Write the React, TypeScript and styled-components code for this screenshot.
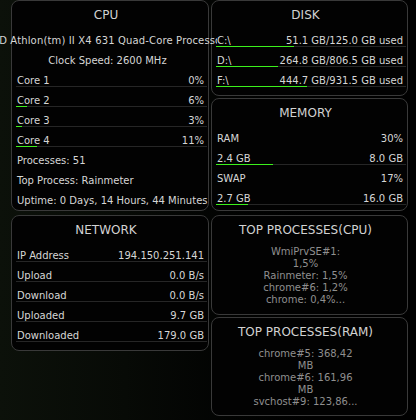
import React from "react";
import styled, { createGlobalStyle } from "styled-components";

const GlobalStyle = createGlobalStyle`
  html, body {
    margin: 0;
    padding: 0;
    height: 100%;
  }
  html {
    background: linear-gradient(90deg, #0c110a 0%, #070a06 30%, #020302 55%, #000 75%);
  }
  body {
    font-family: "DejaVu Sans", "Liberation Sans", sans-serif;
    color: #d6d6d6;
    font-size: 10px;
    overflow: hidden;
  }
`;

const Page = styled.div`
  display: grid;
  grid-template-columns: 198px 197px;
  column-gap: 2px;
  padding-left: 11px;
  align-items: start;
`;

const Column = styled.div`
  display: flex;
  flex-direction: column;
`;

const Panel = styled.section<{ $top?: number; $bottom: number }>`
  border: 1px solid #393939;
  border-radius: 8px;
  background: #020202;
  margin-top: ${(p) => p.$top ?? 0}px;
  padding-bottom: ${(p) => p.$bottom}px;
`;

const Title = styled.div<{ $after?: number }>`
  font-size: 12px;
  line-height: 14px;
  padding: 7px 8px ${(p) => p.$after ?? 5}px 0;
  text-align: center;
  color: #d2d2d2;
  white-space: nowrap;
`;

const Row = styled.div<{ $line?: boolean }>`
  position: relative;
  box-sizing: border-box;
  height: 20px;
  margin: 0 1px 0 4px;
  padding: 0 3px 0 1px;
  display: flex;
  justify-content: space-between;
  align-items: flex-end;
  line-height: 10px;
  white-space: nowrap;
  border-bottom: 1px solid ${(p) => (p.$line ? "#262626" : "transparent")};
`;

const CenterRow = styled(Row)`
  justify-content: center;
  padding-right: 9px;
`;

const ProcessorRow = styled(CenterRow)`
  position: relative;
  z-index: 2;
  padding-right: 15px;
  letter-spacing: 0.15px;
  clip-path: inset(0 -10px 0 -40px);
`;

const Bar = styled.div`
  position: absolute;
  left: 0;
  bottom: -1px;
  height: 1px;
  background: #3cf01c;
`;

const ProcList = styled.div`
  text-align: center;
  color: #8f8f8f;
  font-size: 10px;
  line-height: 12px;
  padding-right: 8px;
  white-space: nowrap;
`;

type StatProps = { label: string; value?: string; line?: boolean; pct?: number };

const Stat = ({ label, value, line, pct }: StatProps) => (
  <Row $line={line}>
    <span>{label}</span>
    {value !== undefined && <span>{value}</span>}
    {pct !== undefined && pct > 0 && <Bar style={{ width: `${pct}%` }} />}
  </Row>
);

const cores = [
  { name: "Core 1", pct: 0 },
  { name: "Core 2", pct: 6 },
  { name: "Core 3", pct: 3 },
  { name: "Core 4", pct: 11 },
];

const disks = [
  { name: "C:\\", used: 51.1, total: 125.0 },
  { name: "D:\\", used: 264.8, total: 806.5 },
  { name: "F:\\", used: 444.7, total: 931.5 },
];

const network = [
  ["IP Address", "194.150.251.141"],
  ["Upload", "0.0 B/s"],
  ["Download", "0.0 B/s"],
  ["Uploaded", "9.7 GB"],
  ["Downloaded", "179.0 GB"],
];

const topCpu = ["WmiPrvSE#1:", "1,5%", "Rainmeter: 1,5%", "chrome#6: 1,2%", "chrome: 0,4%..."];
const topRam = ["chrome#5: 368,42", "MB", "chrome#6: 161,96", "MB", "svchost#9: 123,86..."];

export default function App() {
  return (
    <>
      <GlobalStyle />
      <Page>
        <Column>
          <Panel $bottom={3}>
            <Title>CPU</Title>
            <ProcessorRow>
              <span>AMD Athlon(tm) II X4 631 Quad-Core Processor</span>
            </ProcessorRow>
            <CenterRow>
              <span>Clock Speed: 2600 MHz</span>
            </CenterRow>
            {cores.map((c) => (
              <Stat key={c.name} label={c.name} value={`${c.pct}%`} line pct={c.pct} />
            ))}
            <Stat label="Processes: 51" />
            <Stat label="Top Process: Rainmeter" />
            <Stat label="Uptime: 0 Days, 14 Hours, 44 Minutes" />
          </Panel>
          <Panel $top={4} $bottom={8}>
            <Title>NETWORK</Title>
            {network.map(([k, v]) => (
              <Stat key={k} label={k} value={v} line />
            ))}
          </Panel>
        </Column>
        <Column>
          <Panel $bottom={8}>
            <Title>DISK</Title>
            {disks.map((d) => (
              <Stat
                key={d.name}
                label={d.name}
                value={`${d.used.toFixed(1)} GB/${d.total.toFixed(1)} GB used`}
                line
                pct={(d.used / d.total) * 100}
              />
            ))}
          </Panel>
          <Panel $top={2} $bottom={5}>
            <Title>MEMORY</Title>
            <Stat label="RAM" value="30%" />
            <Stat label="2.4 GB" value="8.0 GB" line pct={30} />
            <Stat label="SWAP" value="17%" />
            <Stat label="2.7 GB" value="16.0 GB" line pct={17} />
          </Panel>
          <Panel $top={4} $bottom={8}>
            <Title $after={9}>TOP PROCESSES(CPU)</Title>
            <ProcList>
              {topCpu.map((l, i) => (
                <div key={i}>{l}</div>
              ))}
            </ProcList>
          </Panel>
          <Panel $top={2} $bottom={7}>
            <Title $after={9}>TOP PROCESSES(RAM)</Title>
            <ProcList>
              {topRam.map((l, i) => (
                <div key={i}>{l}</div>
              ))}
            </ProcList>
          </Panel>
        </Column>
      </Page>
    </>
  );
}
